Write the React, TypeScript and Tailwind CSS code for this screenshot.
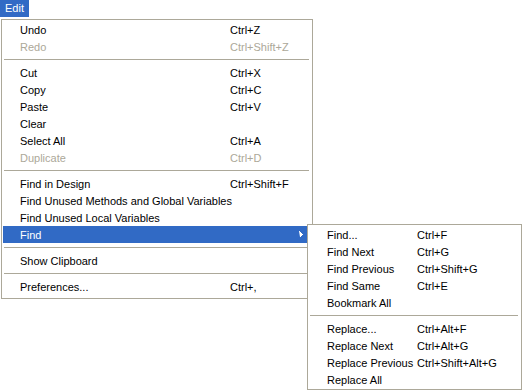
import React from 'react';

type Item = { label: string; shortcut?: string; disabled?: boolean; active?: boolean; submenu?: boolean } | 'sep';

const mainItems: Item[] = [
  { label: 'Undo', shortcut: 'Ctrl+Z' },
  { label: 'Redo', shortcut: 'Ctrl+Shift+Z', disabled: true },
  'sep',
  { label: 'Cut', shortcut: 'Ctrl+X' },
  { label: 'Copy', shortcut: 'Ctrl+C' },
  { label: 'Paste', shortcut: 'Ctrl+V' },
  { label: 'Clear' },
  { label: 'Select All', shortcut: 'Ctrl+A' },
  { label: 'Duplicate', shortcut: 'Ctrl+D', disabled: true },
  'sep',
  { label: 'Find in Design', shortcut: 'Ctrl+Shift+F' },
  { label: 'Find Unused Methods and Global Variables' },
  { label: 'Find Unused Local Variables' },
  { label: 'Find', active: true, submenu: true },
  'sep',
  { label: 'Show Clipboard' },
  'sep',
  { label: 'Preferences...', shortcut: 'Ctrl+,' },
];

const findItems: Item[] = [
  { label: 'Find...', shortcut: 'Ctrl+F' },
  { label: 'Find Next', shortcut: 'Ctrl+G' },
  { label: 'Find Previous', shortcut: 'Ctrl+Shift+G' },
  { label: 'Find Same', shortcut: 'Ctrl+E' },
  { label: 'Bookmark All' },
  'sep',
  { label: 'Replace...', shortcut: 'Ctrl+Alt+F' },
  { label: 'Replace Next', shortcut: 'Ctrl+Alt+G' },
  { label: 'Replace Previous', shortcut: 'Ctrl+Shift+Alt+G' },
  { label: 'Replace All' },
];

function MenuRows({ items, sub }: { items: Item[]; sub?: boolean }) {
  return (
    <>
      {items.map((item, i) => {
        if (item === 'sep') {
          return (
            <div key={i} className="py-[4px] pl-[1px] pr-[2px]">
              <div className="h-px bg-[#aca899]" />
            </div>
          );
        }
        return (
          <div
            key={i}
            className={`flex items-start h-[17px] leading-[19px] ${sub ? 'pl-[18px]' : 'pl-[17px]'} ${
              item.active ? 'bg-[#316ac5] text-white' : item.disabled ? 'text-[#aca899]' : 'text-black'
            }`}
          >
            <span className={`${sub ? 'w-[90px]' : 'w-[210px]'} shrink-0 whitespace-nowrap`}>{item.label}</span>
            <span className="whitespace-nowrap">{item.shortcut}</span>
            {item.submenu && (
              <svg className="ml-auto mr-[8px] mt-[5px]" width="4" height="7" viewBox="0 0 4 7">
                <path d="M0 0h1v1h1v1h1v1h1v1h-1v1h-1v1h-1z" fill="#fff" />
              </svg>
            )}
          </div>
        );
      })}
    </>
  );
}

export default function App() {
  return (
    <div
      className="relative w-[522px] h-[392px] bg-white text-[11px] leading-[17px] overflow-hidden"
      style={{ fontFamily: '"Liberation Sans", Arial, sans-serif' }}
    >
      <div className="w-[29px] h-[17px] bg-[#316ac5] text-white pl-[5px] flex items-center">Edit</div>
      <div className="ml-[1px] mt-[2px] w-[312px] border border-[#aca899] bg-white pt-[1px] pb-[3px] px-[1px]">
        <MenuRows items={mainItems} />
      </div>
      {/* Find submenu */}
      <div className="absolute left-[307px] top-[224px] w-[215px] border border-[#aca899] bg-white py-[1px] px-[1px]">
        <MenuRows items={findItems} sub />
      </div>
    </div>
  );
}
